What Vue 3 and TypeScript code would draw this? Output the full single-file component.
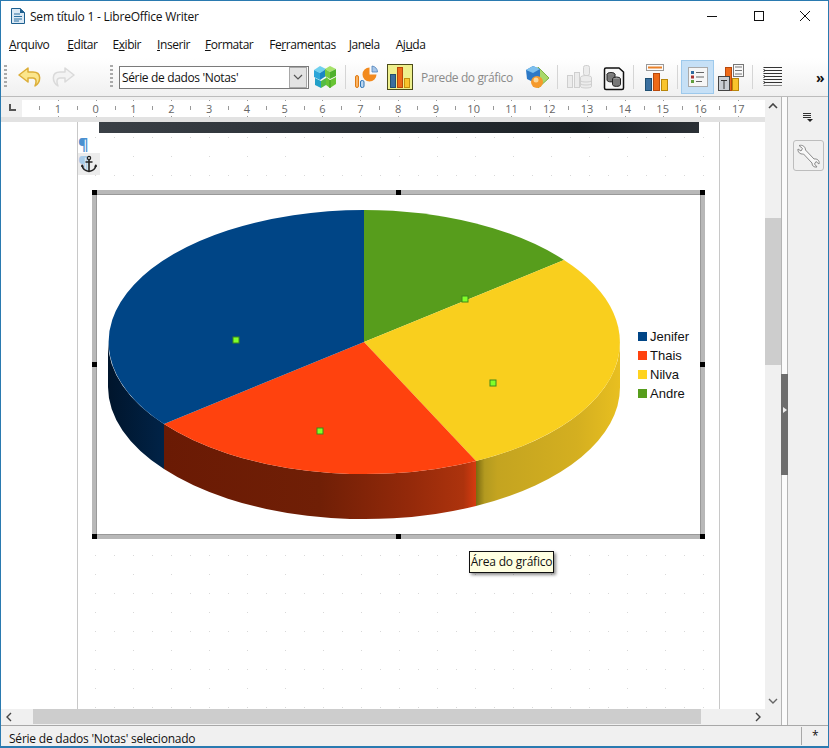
<script setup lang="ts">
const menus = [
  { pre: '', key: 'A', post: 'rquivo' },
  { pre: '', key: 'E', post: 'ditar' },
  { pre: 'E', key: 'x', post: 'ibir' },
  { pre: '', key: 'I', post: 'nserir' },
  { pre: '', key: 'F', post: 'ormatar' },
  { pre: 'Fe', key: 'r', post: 'ramentas' },
  { pre: '', key: 'J', post: 'anela' },
  { pre: 'Aj', key: 'u', post: 'da' },
]
const rulerNums: number[] = [1, 0, 1, 2, 3, 4, 5, 6, 7, 8, 9, 10, 11, 12, 13, 14, 15, 16, 17]
const legend = [
  { name: 'Jenifer', color: '#004586' },
  { name: 'Thais', color: '#ff420e' },
  { name: 'Nilva', color: '#ffd320' },
  { name: 'Andre', color: '#579d1c' },
]
const marks = [
  [236, 340],
  [320, 431],
  [493, 383],
  [465, 299],
]
</script>

<template>
  <div class="win">
    <header class="title">
      <svg class="docicon" width="16" height="18" viewBox="0 0 16 18">
        <path d="M1.5 1.5H10L14.5 5.5V16.5H1.5Z" fill="#dbe9f5" stroke="#1d5f8f" />
        <path d="M10 1V6H15Z" fill="#1d5f8f" />
        <path d="M4 7H10M4 9.5H12M4 12H12M4 14H9" stroke="#2a6f9f" stroke-width="1" />
      </svg>
      <span class="title-text">Sem título 1 - LibreOffice Writer</span>
      <div class="controls">
        <div class="ctl"><svg width="12" height="12" viewBox="0 0 12 12"><path d="M0 6.5H10" stroke="#111" /></svg></div>
        <div class="ctl"><svg width="12" height="12" viewBox="0 0 12 12"><rect x="1.5" y="1.5" width="9" height="9" fill="none" stroke="#111" /></svg></div>
        <div class="ctl"><svg width="12" height="12" viewBox="0 0 12 12"><path d="M1 1L11 11M11 1L1 11" stroke="#111" /></svg></div>
      </div>
    </header>

    <nav class="menu">
      <span v-for="m in menus" :key="m.key + m.post" class="menu-item">{{ m.pre }}<u>{{ m.key }}</u>{{ m.post }}</span>
    </nav>

    <div class="toolbar">
      <i class="grip g1"></i>
      <svg class="undo" width="24" height="22" viewBox="0 0 24 22">
        <path d="M10 2L1 9L10 16V12H15C18 12 19 15 17 20C23 16 24 6 15 6H10Z" fill="#fbe68c" stroke="#dcae38" stroke-width="1.5" stroke-linejoin="round" />
      </svg>
      <svg class="redo" width="24" height="22" viewBox="0 0 24 22">
        <path d="M14 2L23 9L14 16V12H9C6 12 5 15 7 20C1 16 0 6 9 6H14Z" fill="#f3f3f3" stroke="#dadada" stroke-width="1.5" stroke-linejoin="round" />
      </svg>
      <i class="grip g2"></i>
      <div class="combo">
        <span class="combo-text">Série de dados 'Notas'</span>
        <span class="combo-btn">
          <svg width="10" height="6" viewBox="0 0 10 6"><path d="M1 1L5 5L9 1" fill="none" stroke="#555" stroke-width="1.2" /></svg>
        </span>
      </div>
      <svg class="cube" width="24" height="24" viewBox="0 0 24 24">
        <path d="M1 5L7 1L13 4L7 8Z" fill="#6fd0ee" /><path d="M1 5L7 8V15L1 12Z" fill="#2ba5d8" /><path d="M7 8L13 4V11L7 15Z" fill="#1b86c4" />
        <path d="M12 4L17 1L23 4L17 7Z" fill="#a6e26a" /><path d="M17 7L23 4V11L17 14Z" fill="#4fb12e" /><path d="M12 4L17 7V14L12 11Z" fill="#77c93f" />
        <path d="M2 13L8 16V23L2 20Z" fill="#22a0c8" /><path d="M8 16L13 13V20L8 23Z" fill="#55bb44" />
        <path d="M13 12L17 15L23 12V19L17 23L13 20Z" fill="#68c434" /><path d="M17 15V23" stroke="#3f9a22" />
      </svg>
      <i class="sep s1"></i>
      <svg class="pie" width="24" height="24" viewBox="0 0 24 24">
        <rect x="1.5" y="10.5" width="3" height="12" rx="1.5" fill="#f9b366" stroke="#e07b12" />
        <rect x="6.5" y="15.5" width="3.5" height="7" rx="1.5" fill="#bcd6ef" stroke="#2e74b5" />
        <path d="M15.5 9.5V2.5A7 7 0 1 0 22.5 9.5Z" fill="#f28a1e" />
        <path d="M18 1A6 6 0 0 1 23.5 7H18Z" fill="#a8c6e8" stroke="#4d82ba" stroke-width=".8" />
      </svg>
      <div class="active-bar">
        <svg width="24" height="24" viewBox="0 0 24 24">
          <rect x="2.5" y="9.5" width="5" height="13" fill="#3c6f9f" stroke="#23506f" />
          <rect x="9.5" y="2.5" width="5" height="20" fill="#ee6a18" stroke="#b9480b" />
          <rect x="16.5" y="13.5" width="5" height="9" fill="#f9c42c" stroke="#c4900d" />
        </svg>
      </div>
      <span class="wall">Parede do gráfico</span>
      <svg class="shapes" width="25" height="26" viewBox="0 0 25 26">
        <path d="M13 3L24 14L13 24Z" fill="#a9d86a" stroke="#7fb244" />
        <path d="M1 6L8 2L15 5V14L8 18L2 15Z" fill="#2c78c6" />
        <path d="M1 6L8 2L15 5L8 9Z" fill="#7dc0ee" />
        <circle cx="12" cy="18" r="6" fill="#f59a2c" />
        <circle cx="11" cy="16" r="2.5" fill="#fbd79a" />
      </svg>
      <i class="sep s2"></i>
      <svg class="dbgray" width="25" height="24" viewBox="0 0 25 24" fill="#ececec" stroke="#cfcfcf">
        <rect x="0.5" y="10.5" width="5" height="12" />
        <rect x="7.5" y="7.5" width="5" height="15" />
        <rect x="16.5" y="0.5" width="6" height="10" rx="2" />
        <ellipse cx="19" cy="12.5" rx="5.5" ry="2" />
        <path d="M13.5 12.5V21.5C13.5 23.5 24.5 23.5 24.5 21.5V12.5" />
        <path d="M13.5 15.5C13.5 17.5 24.5 17.5 24.5 15.5M13.5 18.5C13.5 20.5 24.5 20.5 24.5 18.5" fill="none" />
      </svg>
      <svg class="dbblack" width="22" height="24" viewBox="0 0 22 24">
        <path d="M1.5 2.5Q1.5 1 3 1H16L20.5 5V21Q20.5 22.5 19 22.5H3Q1.5 22.5 1.5 21Z" fill="#f7f7f7" stroke="#111" stroke-width="1.5" />
        <ellipse cx="8" cy="7.5" rx="4" ry="2" fill="#888" stroke="#222" />
        <path d="M4 7.5V13C4 15.5 12 15.5 12 13V7.5" fill="#777" stroke="#222" />
        <ellipse cx="13.5" cy="12" rx="4" ry="2" fill="#999" stroke="#222" />
        <path d="M9.5 12V17.5C9.5 20 17.5 20 17.5 17.5V12" fill="#777" stroke="#222" />
      </svg>
      <i class="sep s3"></i>
      <svg class="barstitle" width="24" height="27" viewBox="0 0 24 27">
        <rect x="2.5" y="0.5" width="17" height="6" fill="#fbfbfb" stroke="#999" />
        <rect x="4" y="2.5" width="14" height="2" fill="#e9812a" />
        <rect x="1.5" y="14.5" width="6" height="12" fill="#3b6f9f" stroke="#1f4f72" />
        <rect x="9.5" y="9.5" width="6" height="17" fill="#ee6a18" stroke="#b9480b" />
        <rect x="17.5" y="15.5" width="6" height="11" fill="#f9c42c" stroke="#b8860b" />
      </svg>
      <i class="sep s4"></i>
      <div class="active-blue">
        <svg width="22" height="22" viewBox="0 0 22 22">
          <rect x="1.5" y="1.5" width="19" height="19" fill="#f6f6f6" stroke="#a9a9a9" />
          <rect x="4" y="5" width="3" height="3" fill="#2e6b9f" />
          <rect x="4" y="9.5" width="3" height="3" fill="#a83232" />
          <rect x="4" y="14" width="3" height="3" fill="#5f9e3d" />
          <path d="M9 6.5H17M9 11H17M9 15.5H15" stroke="#666" />
        </svg>
      </div>
      <svg class="legendicon" width="28" height="27" viewBox="0 0 28 27">
        <rect x="7.5" y="3.5" width="6" height="23" fill="#ee6a18" stroke="#b9480b" />
        <rect x="0.5" y="12.5" width="11" height="14" fill="#c9ced4" stroke="#444" />
        <path d="M3 16.5H9M6 16.5V25" stroke="#333" />
        <rect x="14.5" y="14.5" width="6" height="12" fill="#f9c42c" stroke="#b8860b" />
        <rect x="15.5" y="0.5" width="10" height="12" fill="#f8f8f8" stroke="#777" />
        <path d="M17 3H24M17 6.5H24M17 10H24" stroke="#777" />
      </svg>
      <i class="sep s5"></i>
      <svg class="gridlines" width="20" height="22" viewBox="0 0 20 22">
        <path d="M1 1.5H19M1 4.5H19M1 7.5H19M1 10.5H19M1 13.5H19M1 16.5H19" stroke="#333" />
        <path d="M1 1V19.5H19" fill="none" stroke="#222" stroke-dasharray="1 1" />
      </svg>
      <span class="more">»</span>
    </div>

    <div class="workspace">
      <div class="main">
        <div class="upper">
          <div class="docarea">
            <div class="ruler-row">
              <div class="tabstop"><i></i></div>
              <div class="ruler">
                <div v-for="(n, i) in rulerNums" :key="i" class="rcell"><span>{{ n }}</span></div>
              </div>
            </div>
            <div class="canvas">
              <div class="page">
                <svg class="dots" width="641" height="586">
                  <defs>
                    <pattern id="grid" x="17" y="-3" width="38" height="38" patternUnits="userSpaceOnUse">
                      <rect x="0" y="18" width="1" height="1" fill="#d8d8d8" />
                      <rect x="19" y="18" width="1" height="1" fill="#d8d8d8" />
                      <rect x="0" y="37" width="1" height="1" fill="#d8d8d8" />
                    </pattern>
                  </defs>
                  <rect width="641" height="586" fill="url(#grid)" />
                </svg>
                <div class="strip"></div>
                <div class="marks">
                  <span class="pilcrow">¶</span>
                  <div class="anchor">
                    <span class="pilcrow faint">¶</span>
                    <svg width="18" height="18" viewBox="0 0 18 18">
                      <circle cx="9" cy="3" r="1.6" fill="none" stroke="#222" stroke-width="1.3" />
                      <path d="M9 4.5V16M5.5 7H12.5M2 10C2.5 14 6 16 9 16.5C12 16 15.5 14 16 10" fill="none" stroke="#222" stroke-width="1.6" />
                      <path d="M1 12L2 9L4 11.5ZM17 12L16 9L14 11.5Z" fill="#222" />
                    </svg>
                  </div>
                </div>
                <div class="frame">
                  <svg class="chart" width="605" height="341" viewBox="96 194 605 341">
                    <defs>
                      <linearGradient id="sideBlue" gradientUnits="userSpaceOnUse" x1="108" y1="0" x2="164" y2="0">
                        <stop offset="0" stop-color="#00152c" />
                        <stop offset="1" stop-color="#012347" />
                      </linearGradient>
                      <linearGradient id="sideOrange" gradientUnits="userSpaceOnUse" x1="164" y1="0" x2="476" y2="0">
                        <stop offset="0" stop-color="#6a1a04" />
                        <stop offset=".5" stop-color="#701f06" />
                        <stop offset=".78" stop-color="#93290a" />
                        <stop offset=".96" stop-color="#ad330d" />
                        <stop offset="1" stop-color="#d63b10" />
                      </linearGradient>
                      <linearGradient id="sideYellow" gradientUnits="userSpaceOnUse" x1="476" y1="0" x2="620" y2="0">
                        <stop offset="0" stop-color="#7b6a10" />
                        <stop offset=".06" stop-color="#b39a20" />
                        <stop offset=".15" stop-color="#c4a420" />
                        <stop offset=".7" stop-color="#d4af20" />
                        <stop offset="1" stop-color="#e8bf20" />
                      </linearGradient>
                    </defs>
                    <path d="M108 342A256 132 0 0 0 164 424L164 469A256 132 0 0 1 108 387Z" fill="url(#sideBlue)" />
                    <path d="M164 424A256 132 0 0 0 476 461L476 506A256 132 0 0 1 164 469Z" fill="url(#sideOrange)" />
                    <path d="M476 461A256 132 0 0 0 620 342L620 387A256 132 0 0 1 476 506Z" fill="url(#sideYellow)" />
                    <path d="M364 342L364 210A256 132 0 0 1 564 260Z" fill="#579d1c" />
                    <path d="M364 342L564 260A256 132 0 0 1 476 461Z" fill="#f9cf1e" />
                    <path d="M364 342L476 461A256 132 0 0 1 164 424Z" fill="#ff420e" />
                    <path d="M364 342L164 424A256 132 0 0 1 364 210Z" fill="#004586" />
                    <rect v-for="(p, i) in marks" :key="i" :x="p[0] - 3" :y="p[1] - 3" width="6" height="6" fill="#80ff2a" stroke="#3e8a1a" stroke-width="1" />
                  </svg>
                  <ul class="legend">
                    <li v-for="l in legend" :key="l.name"><i :style="{ background: l.color }"></i>{{ l.name }}</li>
                  </ul>
                  <i class="hd tl"></i><i class="hd tc"></i><i class="hd tr"></i>
                  <i class="hd ml"></i><i class="hd mr"></i>
                  <i class="hd bl"></i><i class="hd bc"></i><i class="hd br"></i>
                </div>
              </div>
              <div class="tooltip">Área do gráfico</div>
            </div>
          </div>
          <div class="vscroll">
            <svg class="chev-top" width="10" height="6" viewBox="0 0 10 6"><path d="M1 5L5 1L9 5" fill="none" stroke="#444" stroke-width="1.6" /></svg>
            <div class="vthumb"></div>
            <svg class="chev-bot" width="10" height="6" viewBox="0 0 10 6"><path d="M1 1L5 5L9 1" fill="none" stroke="#666" stroke-width="1.4" /></svg>
          </div>
        </div>
        <div class="hscroll">
          <svg width="6" height="10" viewBox="0 0 6 10"><path d="M5 1L1 5L5 9" fill="none" stroke="#444" stroke-width="1.4" /></svg>
          <div class="hthumb"></div>
          <svg width="6" height="10" viewBox="0 0 6 10"><path d="M1 1L5 5L1 9" fill="none" stroke="#444" stroke-width="1.4" /></svg>
        </div>
      </div>
      <aside class="side">
        <div class="handle"><div class="handle-dark"><b></b></div></div>
        <div class="deck">
          <svg class="deck-menu" width="10" height="10" viewBox="0 0 10 10">
            <path d="M0 1.5H8M0 3.5H8M0 5.5H8" stroke="#333" />
            <path d="M4 7H10L7 10Z" fill="#222" />
          </svg>
          <div class="deck-btn">
            <svg width="26" height="26" viewBox="0 0 26 26">
              <path d="M4 2.5L7.5 5.5L6 8L3 6C2.5 9 5 11.5 8.5 11L17 20C17 23 19 24.5 22 24L19.5 21L21 18.5L24 21C25 17.5 22 15.5 19 16L10.5 7C10.5 4 8 1.5 4 2.5Z" fill="#f8f8f8" stroke="#8a8a8a" />
            </svg>
          </div>
        </div>
      </aside>
    </div>

    <footer class="status">
      <span class="status-text">Série de dados 'Notas' selecionado</span>
      <span class="status-star">*</span>
    </footer>
  </div>
</template>

<style>
html,
body {
  margin: 0;
  overflow: hidden;
}
</style>

<style scoped>
.win {
  box-sizing: border-box;
  width: 829px;
  height: 748px;
  border: 1px solid #2a7ab0;
  border-bottom-width: 2px;
  display: flex;
  flex-direction: column;
  background: #fff;
  font-family: "Open Sans", "Noto Sans", sans-serif;
  font-size: 12px;
  letter-spacing: -0.22px;
  color: #111;
  overflow: hidden;
}
.title {
  height: 30px;
  flex: none;
  display: flex;
  align-items: center;
  padding-left: 9px;
}
.docicon {
  flex: none;
}
.title-text {
  margin-left: 4px;
}
.controls {
  margin-left: auto;
  display: flex;
}
.ctl {
  width: 46px;
  height: 30px;
  display: flex;
  align-items: center;
  justify-content: center;
}
.menu {
  height: 27px;
  flex: none;
  display: flex;
  align-items: center;
  padding-left: 8px;
  gap: 16px;
  letter-spacing: -0.45px;
}
.menu-item:nth-child(1) { margin-right: 2px; }
.menu-item:nth-child(2) { margin-right: -1px; }
.menu-item:nth-child(4) { margin-right: -1px; }
.menu-item:nth-child(6) { margin-right: -3px; }
.toolbar {
  height: 39px;
  flex: none;
  box-sizing: border-box;
  border-bottom: 1px solid #bcbcbc;
  background: linear-gradient(#fff, #f0f0f0);
  display: flex;
  align-items: center;
  padding-left: 3px;
}
.toolbar > * {
  flex: none;
}
.grip {
  width: 3px;
  height: 24px;
  background: repeating-linear-gradient(#aaa 0 2px, transparent 2px 4px);
}
.g2 { margin-left: 35px; }
.sep {
  width: 1px;
  height: 24px;
  background: #d5d5d5;
}
.undo { margin-left: 11px; }
.redo { margin-left: 9px; }
.combo {
  margin-left: 6px;
  width: 190px;
  height: 23px;
  box-sizing: border-box;
  border: 1px solid #7a7a7a;
  background: #fff;
  display: flex;
  align-items: center;
  justify-content: space-between;
  padding: 0 1px 0 2px;
  letter-spacing: -0.35px;
}
.combo-btn {
  width: 16px;
  height: 19px;
  background: #e3e3e3;
  border: 1px solid #a8a8a8;
  display: flex;
  align-items: center;
  justify-content: center;
}
.cube { margin-left: 4px; }
.s1 { margin-left: 8px; }
.pie { margin-left: 8px; }
.active-bar {
  margin-left: 9px;
  width: 26px;
  height: 26px;
  box-sizing: border-box;
  border: 1px solid #4d4d1a;
  background: #eef08e;
  display: flex;
  align-items: center;
  justify-content: center;
}
.wall {
  margin-left: 8px;
  width: 92px;
  color: #8a8a8a;
  white-space: nowrap;
  letter-spacing: -0.4px;
}
.shapes { margin-left: 12px; }
.s2 { margin-left: 7px; }
.dbgray { margin-left: 9px; }
.dbblack { margin-left: 11px; margin-top: 4px; }
.s3 { margin-left: 8px; }
.barstitle { margin-left: 10px; }
.s4 { margin-left: 9px; }
.active-blue {
  margin-left: 3px;
  width: 33px;
  height: 34px;
  box-sizing: border-box;
  border: 1px solid #9dc9ec;
  background: #c6e0f6;
  display: flex;
  align-items: center;
  justify-content: center;
}
.legendicon { margin-left: 4px; }
.s5 { margin-left: 6px; }
.gridlines { margin-left: 10px; }
.more {
  margin-left: 33px;
  font-size: 14px;
  font-weight: 700;
  line-height: 15px;
}
.workspace {
  flex: 1;
  min-height: 0;
  display: flex;
}
.main {
  width: 780px;
  flex: none;
  display: flex;
  flex-direction: column;
}
.upper {
  flex: 1;
  min-height: 0;
  display: flex;
}
.docarea {
  width: 764px;
  flex: none;
  display: flex;
  flex-direction: column;
}
.ruler-row {
  height: 25px;
  flex: none;
  box-sizing: border-box;
  padding-top: 3px;
  background: linear-gradient(#f0f0f0 0 20px, #e2e2e2 20px);
  display: flex;
}
.tabstop {
  width: 21px;
  height: 17px;
  position: relative;
}
.tabstop i {
  position: absolute;
  left: 8px;
  top: 4px;
  width: 7px;
  height: 7px;
  box-sizing: border-box;
  border-left: 2px solid #555;
  border-bottom: 2px solid #555;
}
.ruler {
  flex: 1;
  height: 17px;
  background: #fff;
  display: flex;
  padding-left: 17px;
  overflow: hidden;
}
.rcell {
  width: 37.8px;
  flex: none;
  position: relative;
  text-align: center;
  color: #666;
  font-size: 11px;
  line-height: 17px;
  letter-spacing: 0;
}
.rcell::before {
  content: "";
  position: absolute;
  left: 0;
  top: 6px;
  width: 1px;
  height: 4px;
  background: #999;
}
.rcell::after {
  content: "";
  position: absolute;
  left: 50%;
  top: 0;
  width: 1px;
  height: 17px;
  background: linear-gradient(#999 0 2px, transparent 2px 15px, #999 15px);
}
.rcell span {
  position: relative;
  z-index: 1;
  background: #fff;
}
.canvas {
  flex: 1;
  min-height: 0;
  position: relative;
  background: #fff;
  overflow: hidden;
}
.page {
  position: relative;
  box-sizing: border-box;
  margin-left: 76px;
  width: 643px;
  height: 100%;
  border-left: 1px solid #c8c8c8;
  border-right: 1px solid #c8c8c8;
}
.dots {
  position: absolute;
  left: 0;
  top: 0;
}
.strip {
  position: relative;
  margin-left: 21px;
  width: 600px;
  height: 11px;
  background: linear-gradient(90deg, #3a4046, #2a3036 40%, #1c2226 80%, #2b3036);
}
.marks {
  position: relative;
  height: 57px;
  padding-top: 4px;
  box-sizing: border-box;
}
.pilcrow {
  display: block;
  height: 16px;
  line-height: 14px;
  font-size: 16px;
  font-weight: 700;
  color: #4a90d0;
  letter-spacing: 0;
}
.pilcrow.faint {
  position: absolute;
  left: 0;
  top: 2px;
  color: #a8cbe8;
}
.anchor {
  position: relative;
  width: 22px;
  height: 22px;
  background: #ececec;
  display: flex;
  align-items: center;
  justify-content: center;
}
.anchor svg {
  position: relative;
}
.frame {
  position: relative;
  box-sizing: border-box;
  margin-left: 14px;
  width: 613px;
  height: 349px;
  border: 4px solid #b8b8b8;
  background: #fff;
  box-shadow: inset 0 0 0 1px #999;
  display: flex;
}
.chart {
  flex: none;
  display: block;
}
.legend {
  position: absolute;
  left: 542px;
  top: 133px;
  margin: 0;
  padding: 0;
  list-style: none;
  font-family: "Liberation Sans", Arial, sans-serif;
  font-size: 13px;
  line-height: 19px;
  letter-spacing: 0;
  color: #111;
}
.legend li {
  display: flex;
  align-items: center;
}
.legend i {
  width: 9px;
  height: 9px;
  margin-right: 3px;
}
.hd {
  position: absolute;
  width: 5px;
  height: 5px;
  background: #000;
}
.tl { left: -4px; top: -4px; }
.tc { left: 300px; top: -4px; }
.tr { right: -4px; top: -4px; }
.ml { left: -4px; top: 168px; }
.mr { right: -4px; top: 168px; }
.bl { left: -4px; bottom: -4px; }
.bc { left: 300px; bottom: -4px; }
.br { right: -4px; bottom: -4px; }
.tooltip {
  position: absolute;
  left: 468px;
  top: 429px;
  width: 85px;
  height: 22px;
  box-sizing: border-box;
  border: 1px solid #111;
  background: #ffffe1;
  box-shadow: 2px 2px 3px rgba(0, 0, 0, 0.45);
  line-height: 20px;
  text-align: center;
  white-space: nowrap;
}
.vscroll {
  width: 16px;
  flex: none;
  background: #f0f0f0;
  position: relative;
  display: flex;
  flex-direction: column;
  align-items: center;
}
.chev-top { margin-top: 6px; }
.vthumb {
  width: 16px;
  height: 147px;
  margin-top: 109px;
  background: #cdcdcd;
}
.chev-bot { margin-top: auto; margin-bottom: 5px; }
.hscroll {
  height: 16px;
  flex: none;
  box-sizing: border-box;
  background: #f0f0f0;
  display: flex;
  align-items: center;
  justify-content: space-between;
  padding: 0 20px 0 5px;
  position: relative;
}
.hthumb {
  position: absolute;
  left: 32px;
  top: 0;
  width: 668px;
  height: 15px;
  background: #cdcdcd;
}
.side {
  flex: 1;
  display: flex;
  background: #f0f0f0;
}
.handle {
  width: 7px;
  flex: none;
  box-sizing: border-box;
  background: #fbfbfb;
  border-left: 1px solid #b4b4b4;
  border-right: 1px solid #b4b4b4;
  padding-top: 277px;
}
.handle-dark {
  margin: 0 -1px;
  height: 101px;
  background: #6d6d6d;
  box-sizing: border-box;
  padding-top: 33px;
  display: flex;
  align-items: flex-start;
  justify-content: center;
}
.handle-dark b {
  width: 0;
  height: 0;
  border-left: 4px solid #eee;
  border-top: 3px solid transparent;
  border-bottom: 3px solid transparent;
}
.deck {
  flex: 1;
  display: flex;
  flex-direction: column;
  align-items: center;
}
.deck-menu { margin-top: 15px; }
.deck-btn {
  margin-top: 18px;
  width: 31px;
  height: 31px;
  box-sizing: border-box;
  border: 1px solid #bdbdbd;
  border-radius: 3px;
  display: flex;
  align-items: center;
  justify-content: center;
}
.status {
  height: 21px;
  flex: none;
  box-sizing: border-box;
  border-top: 1px solid #a8a8a8;
  background: #f0f0f0;
  display: flex;
  align-items: center;
  padding-left: 8px;
}
.status-text {
  flex: 1;
  margin-top: 4px;
}
.status-star {
  width: 27px;
  height: 18px;
  line-height: 18px;
  box-sizing: border-box;
  border-left: 1px solid #a8a8a8;
  padding-left: 10px;
}
</style>
